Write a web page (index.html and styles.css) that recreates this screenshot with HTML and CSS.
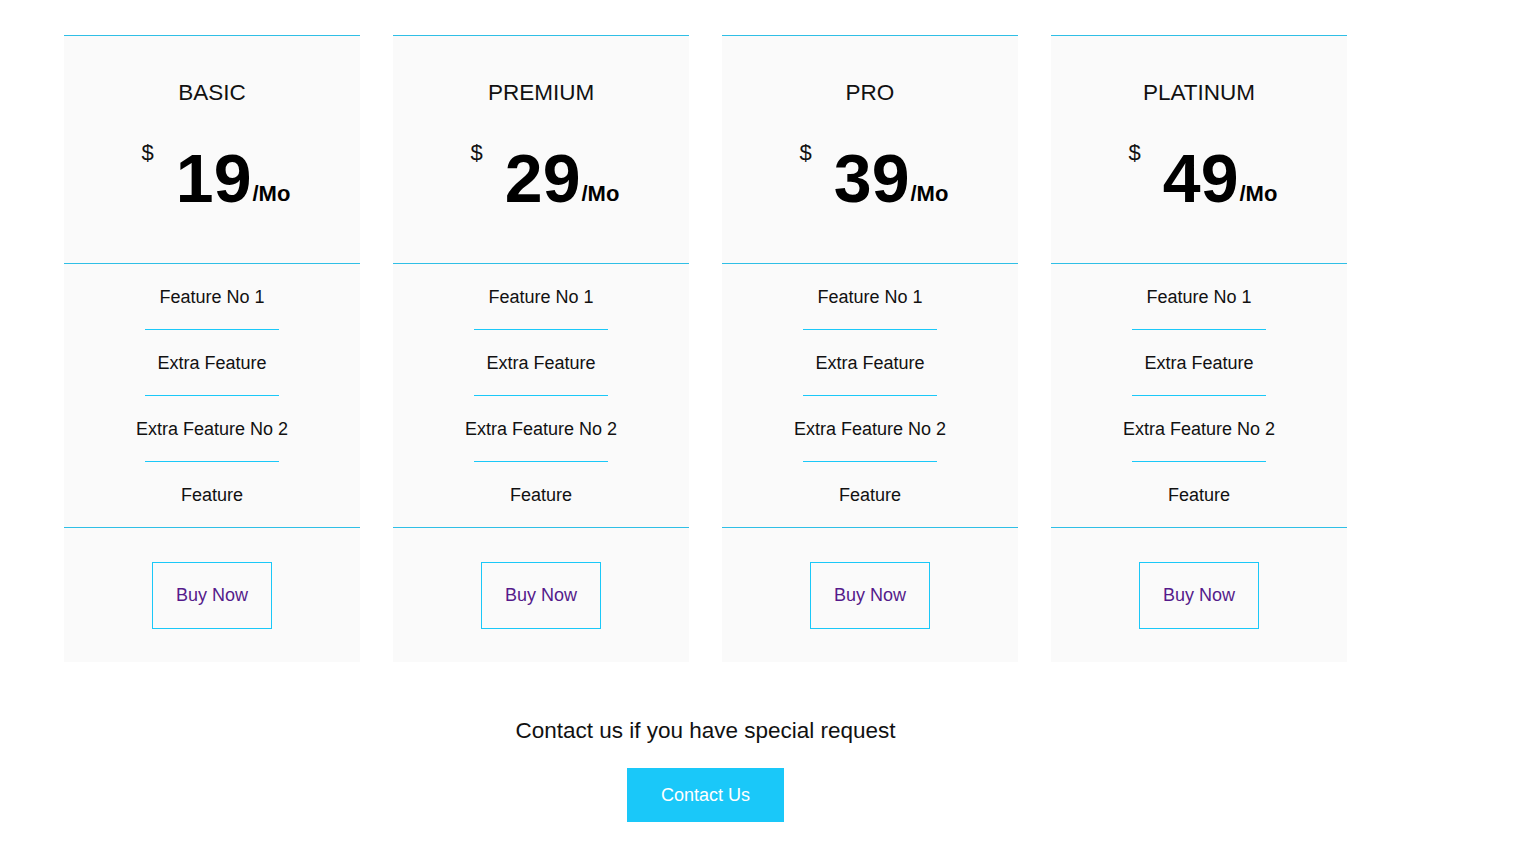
FILE: index.html
```html
<!DOCTYPE html>
<html lang="en">
<head>
<meta charset="utf-8">
<title>Pricing</title>
<link rel="stylesheet" href="styles.css">
</head>
<body>
<main class="page">
  <section class="plans">
    <div class="card">
      <div class="card-head">
        <h2 class="plan-name">BASIC</h2>
        <div class="price"><span class="currency">$</span><span class="amount">19</span><span class="per">/Mo</span></div>
      </div>
      <ul class="features">
        <li>Feature No 1</li>
        <li>Extra Feature</li>
        <li>Extra Feature No 2</li>
        <li>Feature</li>
      </ul>
      <div class="card-foot"><a class="buy" href="#">Buy Now</a></div>
    </div>
    <div class="card">
      <div class="card-head">
        <h2 class="plan-name">PREMIUM</h2>
        <div class="price"><span class="currency">$</span><span class="amount">29</span><span class="per">/Mo</span></div>
      </div>
      <ul class="features">
        <li>Feature No 1</li>
        <li>Extra Feature</li>
        <li>Extra Feature No 2</li>
        <li>Feature</li>
      </ul>
      <div class="card-foot"><a class="buy" href="#">Buy Now</a></div>
    </div>
    <div class="card">
      <div class="card-head">
        <h2 class="plan-name">PRO</h2>
        <div class="price"><span class="currency">$</span><span class="amount">39</span><span class="per">/Mo</span></div>
      </div>
      <ul class="features">
        <li>Feature No 1</li>
        <li>Extra Feature</li>
        <li>Extra Feature No 2</li>
        <li>Feature</li>
      </ul>
      <div class="card-foot"><a class="buy" href="#">Buy Now</a></div>
    </div>
    <div class="card">
      <div class="card-head">
        <h2 class="plan-name">PLATINUM</h2>
        <div class="price"><span class="currency">$</span><span class="amount">49</span><span class="per">/Mo</span></div>
      </div>
      <ul class="features">
        <li>Feature No 1</li>
        <li>Extra Feature</li>
        <li>Extra Feature No 2</li>
        <li>Feature</li>
      </ul>
      <div class="card-foot"><a class="buy" href="#">Buy Now</a></div>
    </div>
  </section>
  <section class="contact">
    <p class="contact-text">Contact us if you have special request</p>
    <a class="contact-btn" href="#">Contact Us</a>
  </section>
</main>
</body>
</html>
```

FILE: styles.css
```css
* { box-sizing: border-box; }

html, body {
  margin: 0;
  padding: 0;
  background: #ffffff;
}

body {
  font-family: "Liberation Sans", Arial, sans-serif;
  color: #111111;
}

.page {
  width: 1283px;
  margin-left: 64px;
  padding-top: 35px;
}

.plans {
  display: flex;
  gap: 33px;
}

.card {
  width: 296px;
  background: #fafafa;
  border-top: 1px solid #2fbfe6;
}

.card-head {
  padding: 43px 0 49px;
  border-bottom: 1px solid #2fbfe6;
  text-align: center;
}

.plan-name {
  margin: 0;
  font-size: 22.5px;
  font-weight: 400;
  line-height: 28px;
  color: #111111;
}

.price {
  margin-top: 35px;
  height: 72px;
  line-height: 72px;
  white-space: nowrap;
  text-align: center;
  color: #000000;
}

.currency {
  display: inline-block;
  vertical-align: top;
  font-size: 22px;
  line-height: 22px;
  margin-left: 8px;
  margin-right: 22px;
  color: #111111;
}

.amount {
  font-size: 68px;
  font-weight: 700;
  line-height: 72px;
  vertical-align: baseline;
}

.per {
  font-size: 22px;
  font-weight: 700;
  margin-left: 1px;
  vertical-align: baseline;
  position: relative;
  top: -1px;
}

.features {
  list-style: none;
  margin: 0;
  padding: 0;
  border-bottom: 1px solid #2fbfe6;
}

.features li {
  padding-top: 22px;
  font-size: 18px;
  line-height: 22px;
  text-align: center;
  color: #111111;
}

.features li::after {
  content: "";
  display: block;
  width: 134px;
  height: 1px;
  margin: 21px auto 0;
  background: #1ac8f8;
}

.features li:last-child {
  padding-bottom: 21px;
}

.features li:last-child::after {
  display: none;
}

.card-foot {
  padding: 34px 0 33px;
  text-align: center;
}

.buy {
  display: inline-block;
  padding: 22px 22.5px;
  font-size: 18px;
  line-height: 21px;
  color: #551a8b;
  text-decoration: none;
  border: 1px solid #1ac8f8;
}

.contact {
  padding-top: 55px;
  text-align: center;
}

.contact-text {
  margin: 0;
  font-size: 22.5px;
  line-height: 28px;
  color: #111111;
}

.contact-btn {
  display: inline-block;
  margin-top: 23px;
  padding: 16px 34px;
  font-size: 18px;
  line-height: 22px;
  color: #ffffff;
  background: #1ac8f9;
  text-decoration: none;
}
```
